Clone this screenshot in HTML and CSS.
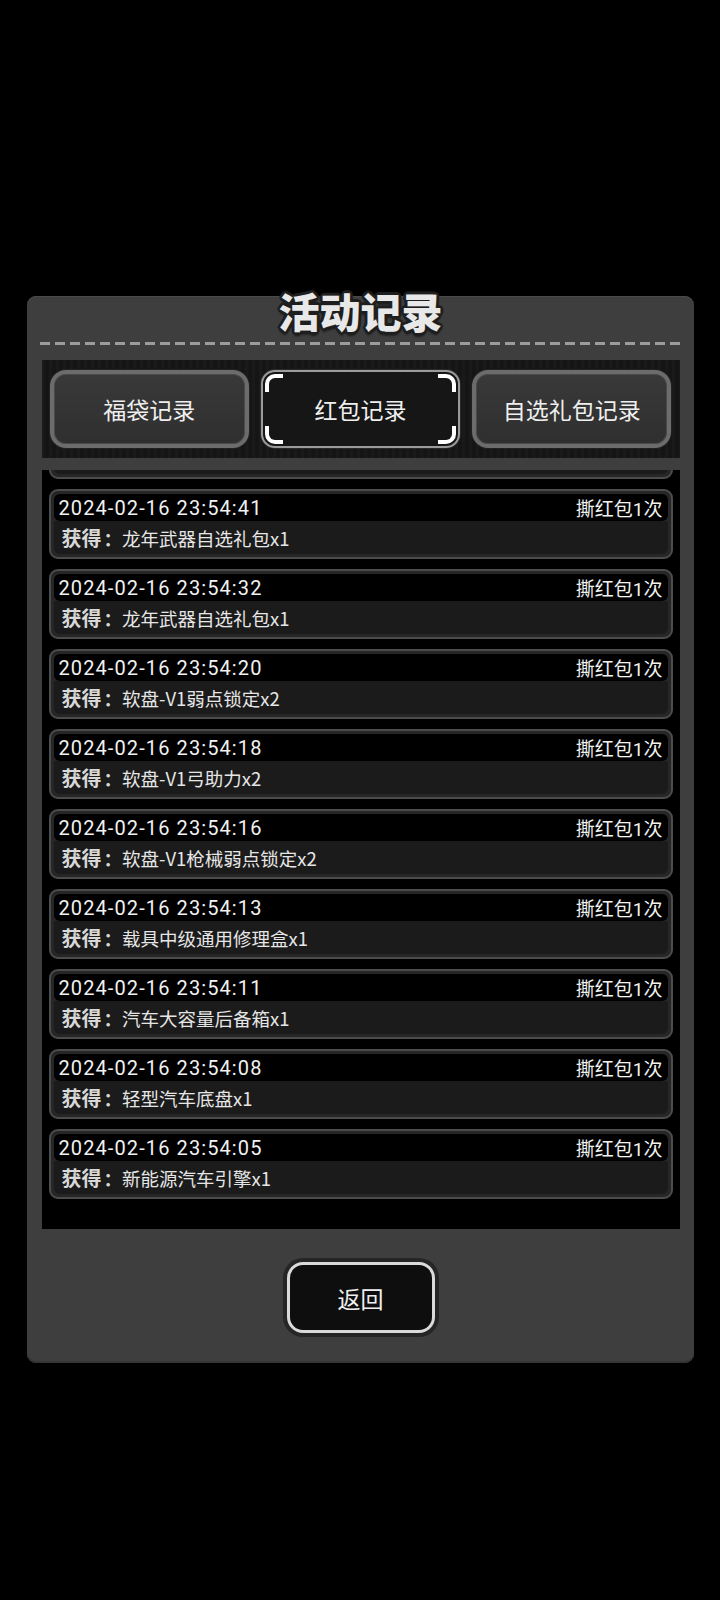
FILE: index.html
```html
<!DOCTYPE html>
<html lang="zh-CN">
<head>
    <meta charset="UTF-8">
    <meta name="viewport" content="width=device-width, initial-scale=1.0">
    <title>活动记录</title>
    <link rel="stylesheet" href="styles.css">
</head>
<body>
    <div class="panel">
        <h1 class="title">活动记录</h1>
        <div class="dash-line"></div>

        <div class="tabs">
            <div class="tab">福袋记录</div>
            <div class="tab active">
                <span class="corner tl"></span>
                <span class="corner tr"></span>
                <span class="corner bl"></span>
                <span class="corner br"></span>
                红包记录
            </div>
            <div class="tab">自选礼包记录</div>
        </div>

        <div class="list">
            <div class="rows">
                <!-- 上一条记录已滚出可视区域，只露出底边 -->
                <div class="entry">
                    <div class="entry-head"></div>
                    <div class="entry-body"></div>
                </div>
                <div class="entry">
                    <div class="entry-head"><span class="time">2024-02-16 23:54:41</span><span>撕红包1次</span></div>
                    <div class="entry-body"><b>获得</b><span class="colon">：</span>龙年武器自选礼包x1</div>
                </div>
                <div class="entry">
                    <div class="entry-head"><span class="time">2024-02-16 23:54:32</span><span>撕红包1次</span></div>
                    <div class="entry-body"><b>获得</b><span class="colon">：</span>龙年武器自选礼包x1</div>
                </div>
                <div class="entry">
                    <div class="entry-head"><span class="time">2024-02-16 23:54:20</span><span>撕红包1次</span></div>
                    <div class="entry-body"><b>获得</b><span class="colon">：</span>软盘-V1弱点锁定x2</div>
                </div>
                <div class="entry">
                    <div class="entry-head"><span class="time">2024-02-16 23:54:18</span><span>撕红包1次</span></div>
                    <div class="entry-body"><b>获得</b><span class="colon">：</span>软盘-V1弓助力x2</div>
                </div>
                <div class="entry">
                    <div class="entry-head"><span class="time">2024-02-16 23:54:16</span><span>撕红包1次</span></div>
                    <div class="entry-body"><b>获得</b><span class="colon">：</span>软盘-V1枪械弱点锁定x2</div>
                </div>
                <div class="entry">
                    <div class="entry-head"><span class="time">2024-02-16 23:54:13</span><span>撕红包1次</span></div>
                    <div class="entry-body"><b>获得</b><span class="colon">：</span>载具中级通用修理盒x1</div>
                </div>
                <div class="entry">
                    <div class="entry-head"><span class="time">2024-02-16 23:54:11</span><span>撕红包1次</span></div>
                    <div class="entry-body"><b>获得</b><span class="colon">：</span>汽车大容量后备箱x1</div>
                </div>
                <div class="entry">
                    <div class="entry-head"><span class="time">2024-02-16 23:54:08</span><span>撕红包1次</span></div>
                    <div class="entry-body"><b>获得</b><span class="colon">：</span>轻型汽车底盘x1</div>
                </div>
                <div class="entry">
                    <div class="entry-head"><span class="time">2024-02-16 23:54:05</span><span>撕红包1次</span></div>
                    <div class="entry-body"><b>获得</b><span class="colon">：</span>新能源汽车引擎x1</div>
                </div>
            </div>
        </div>

        <div class="footer">
            <div class="back-btn"><div class="back-inner">返回</div></div>
        </div>
    </div>
</body>
</html>
```

FILE: styles.css
```css
body {
    margin: 0;
    background-color: #000;
    font-family: Roboto, "Noto Sans CJK SC", sans-serif;
    color: #eee;
}

.panel {
    box-sizing: border-box;
    width: 667px;
    height: 1067px;
    margin: 296px auto 0;
    padding: 0 14px 26px 15px;
    background-color: #3e3e3e;
    border-radius: 9px;
    box-shadow: inset 0 1px 0 #4a4a4a, inset 0 -2px 0 #353535;
    display: flex;
    flex-direction: column;
}

.title {
    margin: -8px 0 0;
    height: 44px;
    line-height: 44px;
    text-align: center;
    font-family: "Noto Sans CJK SC", sans-serif;
    font-size: 41px;
    font-weight: 900;
    color: #e8e8e8;
    text-shadow:
        3px 0 0 #1e1e1e, -3px 0 0 #1e1e1e, 0 3px 0 #1e1e1e, 0 -3px 0 #1e1e1e,
        2px 2px 0 #1e1e1e, -2px 2px 0 #1e1e1e, 2px -2px 0 #1e1e1e, -2px -2px 0 #1e1e1e,
        0 4px 2px #1e1e1e;
}

.dash-line {
    margin: 10px -1px 0 -2px;
    height: 3px;
    background: repeating-linear-gradient(to right, #9c9c9c 0 10px, transparent 10px 15px);
}

.tabs {
    margin-top: 15px;
    height: 98px;
    box-sizing: border-box;
    padding: 10px 8px;
    display: grid;
    grid-template-columns: repeat(3, 1fr);
    gap: 12px;
    background-color: #151515;
    background-image: repeating-linear-gradient(to right, rgba(255,255,255,0.02) 0 3px, transparent 3px 7px);
}

.tab {
    position: relative;
    display: flex;
    justify-content: center;
    align-items: center;
    border: 4px solid #6c6c6c;
    border-radius: 16px;
    background: linear-gradient(#393939, #2f2f2f);
    box-shadow: inset 0 0 0 1px #4a4a4a, 0 0 0 1px #222;
    font-family: "Noto Sans CJK SC", sans-serif;
    font-size: 23px;
    color: #efefef;
}

.tab.active {
    border: 2px solid #9a9a9a;
    border-radius: 14px;
    background: #161616;
    box-shadow: 0 0 0 1px #2a2a2a;
}

.corner {
    position: absolute;
    width: 14px;
    height: 14px;
    border: 0 solid #fff;
}
.corner.tl { top: 2px; left: 2px; border-top-width: 4px; border-left-width: 4px; border-top-left-radius: 10px; }
.corner.tr { top: 2px; right: 2px; border-top-width: 4px; border-right-width: 4px; border-top-right-radius: 10px; }
.corner.bl { bottom: 2px; left: 2px; border-bottom-width: 4px; border-left-width: 4px; border-bottom-left-radius: 10px; }
.corner.br { bottom: 2px; right: 2px; border-bottom-width: 4px; border-right-width: 4px; border-bottom-right-radius: 10px; }

.list {
    margin-top: 12px;
    height: 759px;
    background-color: #000;
    overflow: hidden;
    padding: 0 7px;
}

.rows {
    margin-top: -61px;
    display: flex;
    flex-direction: column;
    gap: 10px;
}

.entry {
    box-sizing: border-box;
    height: 70px;
    border: 2px solid #4c4c4c;
    border-radius: 9px;
    background-color: #262626;
    padding: 3px;
    display: flex;
    flex-direction: column;
}

.entry-head {
    height: 27px;
    padding: 0 5px;
    display: flex;
    justify-content: space-between;
    align-items: center;
    background-color: #000;
    border-radius: 6px;
    font-size: 19px;
    color: #f2f2f2;
}

.entry-head .time {
    font-size: 20px;
    letter-spacing: 1.1px;
}

.entry-body {
    flex: 1;
    padding: 0 8px;
    display: flex;
    align-items: center;
    background-color: #1b1b1b;
    border-radius: 0 0 6px 6px;
    font-family: "Noto Sans CJK SC", sans-serif;
    font-size: 18.5px;
    color: #e6e6e6;
}

.entry-body b {
    font-size: 20px;
    font-weight: 700;
    color: #d8d8d8;
}

.entry-body .colon {
    margin-left: 2px;
    font-weight: 700;
    color: #d8d8d8;
}

.footer {
    margin-top: 29px;
    display: flex;
    justify-content: center;
}

.back-btn {
    width: 156px;
    height: 79px;
    box-sizing: border-box;
    padding: 4px;
    background-color: #262626;
    border-radius: 20px;
}

.back-inner {
    height: 100%;
    box-sizing: border-box;
    border: 3px solid #dadada;
    border-radius: 16px;
    background-color: #0e0e0e;
    display: flex;
    justify-content: center;
    align-items: center;
    font-family: "Noto Sans CJK SC", sans-serif;
    font-size: 23px;
    color: #f0f0f0;
}
```
